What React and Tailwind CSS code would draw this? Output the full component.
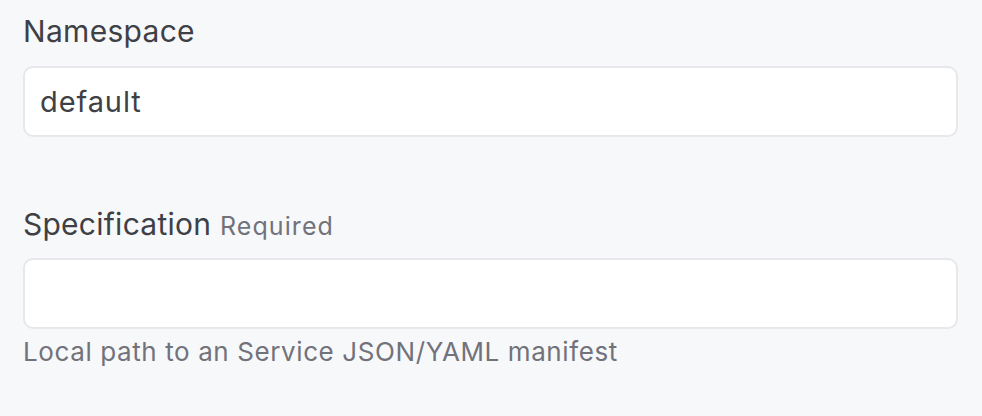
export default function App() {
  return (
    <div
      className="min-h-[416px] w-full bg-[#f7f8fa] pl-[23px] pr-[24px] pt-[13px] flex flex-col"
      style={{ fontFamily: 'Inter, "Noto Sans", sans-serif' }}
    >
      <label className="block text-[30px] leading-[36px] text-[#3f3f46] tracking-[0.3px]">Namespace</label>
      <div className="mt-[17px] h-[71px] rounded-[10px] border-2 border-[#e8e8ec] bg-white flex items-center pl-[15px]">
        <span className="text-[29px] text-[#3f3f46] tracking-[0.9px]">default</span>
      </div>
      <div className="mt-[69px] text-[30px] leading-[36px] text-[#3f3f46] tracking-[0.25px] whitespace-nowrap">
        Specification{' '}
        <span className="text-[25px] leading-none text-[#72727a] tracking-[1.1px]">Required</span>
      </div>
      <div className="mt-[16px] h-[71px] rounded-[10px] border-2 border-[#e8e8ec] bg-white" />
      <p className="mt-[7px] text-[26px] leading-[32px] text-[#72727a] tracking-[0.6px]">
        Local path to an Service JSON/YAML manifest
      </p>
    </div>
  );
}
